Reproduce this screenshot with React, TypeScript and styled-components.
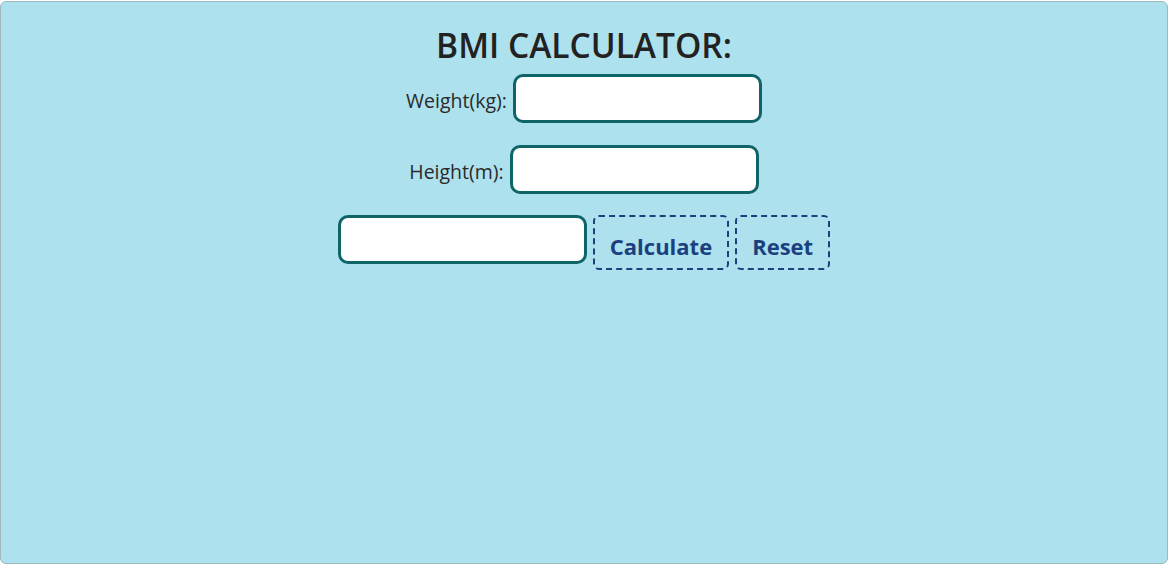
import React from "react";
import styled, { createGlobalStyle } from "styled-components";

const GlobalStyle = createGlobalStyle`
  html, body {
    margin: 0;
    padding: 0;
    background: #ffffff;
  }
  body {
    font-family: "Open Sans", "Noto Sans", sans-serif;
  }
`;

const Card = styled.div`
  box-sizing: border-box;
  width: 1168px;
  height: 563px;
  margin-top: 1px;
  background: #ade1ed;
  border: 1px solid #9fb8bf;
  border-radius: 6px;
  display: flex;
  flex-direction: column;
  align-items: center;
  padding-top: 20px;
`;

const Title = styled.h1`
  margin: 0 0 6px;
  font-size: 33.5px;
  font-weight: 600;
  line-height: 46px;
  color: #222222;
`;

const Row = styled.div<{ $gap?: number }>`
  display: flex;
  align-items: center;
  gap: 6px;
  margin-bottom: ${(p) => p.$gap ?? 0}px;
`;

const ButtonRow = styled.div`
  display: flex;
  align-items: flex-start;
  gap: 6px;
`;

const Label = styled.label`
  font-size: 19.5px;
  color: #2a2a2a;
  padding-top: 3px;
`;

const Field = styled.input`
  box-sizing: border-box;
  width: 249px;
  height: 49px;
  border: 3px solid #0e6466;
  border-radius: 10px;
  background: #ffffff;
  outline: none;
  font-size: 18px;
  padding: 0 10px;
`;

const Button = styled.button`
  box-sizing: border-box;
  height: 55px;
  padding: 6px 15px 0;
  background: transparent;
  border: 2px dashed #1c3f7e;
  border-radius: 6px;
  font-family: "Open Sans", "Noto Sans", sans-serif;
  font-size: 22px;
  font-weight: 700;
  color: #1c3f7e;
  cursor: pointer;
`;

export default function App() {
  return (
    <>
      <GlobalStyle />
      <Card>
        <Title>BMI CALCULATOR:</Title>
        <Row $gap={22}>
          <Label>Weight(kg):</Label>
          <Field type="text" />
        </Row>
        <Row $gap={21}>
          <Label>Height(m):</Label>
          <Field type="text" />
        </Row>
        <ButtonRow>
          <Field type="text" readOnly />
          <Button>Calculate</Button>
          <Button>Reset</Button>
        </ButtonRow>
      </Card>
    </>
  );
}
